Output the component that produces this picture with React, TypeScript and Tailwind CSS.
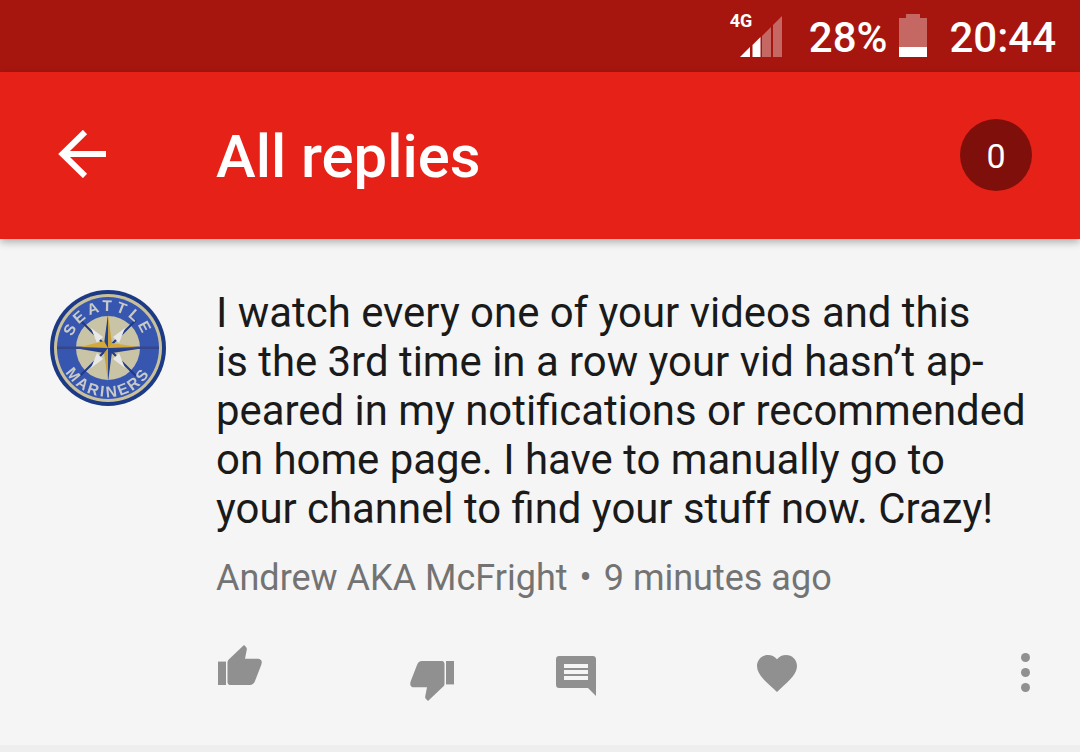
const lines = [
  "I watch every one of your videos and this",
  "is the 3rd time in a row your vid hasn’t ap-",
  "peared in my notifications or recommended",
  "on home page. I have to manually go to",
  "your channel to find your stuff now. Crazy!",
];

function SignalIcon() {
  return (
    <div className="relative h-[48px] w-[52px]">
      <span className="absolute left-0 top-[-3px] text-[18px] leading-[24px] font-bold text-white">4G</span>
      <svg className="absolute left-[10px] top-[3px]" width="42" height="43" viewBox="0 0 42 43" fill="#fff">
        <polygon points="0,42 10,42 10,32" />
        <polygon points="12.500,42 20.500,42 20.500,22 12.500,30" />
        <polygon points="22,42 31,42 31,12 22,21" opacity="0.35" />
        <polygon points="33,42 42,42 42,1 33,10" opacity="0.35" />
      </svg>
    </div>
  );
}

function BatteryIcon() {
  return (
    <svg width="28" height="43" viewBox="0 0 28 43" fill="#fff" className="block">
      <path d="M7 0h14v4h7v29H0V4h7z" opacity="0.35" />
      <rect x="0" y="33" width="28" height="10" />
    </svg>
  );
}

function Avatar() {
  return (
    <svg width="116" height="116" viewBox="0 0 116 116" className="shrink-0 blur-[0.5px]">
      <defs>
        <path id="top-arc" d="M21 58a37 37 0 0 1 74 0" />
        <path id="bottom-arc" d="M9 58a49 49 0 0 0 98 0" />
      </defs>
      <circle cx="58" cy="58" r="58" fill="#1d3a86" />
      <circle cx="58" cy="58" r="54" fill="#c9c19c" />
      <circle cx="58" cy="58" r="51" fill="#3656b0" />
      <circle cx="58" cy="58" r="32" fill="#c9c4a6" />
      <rect x="7" y="56.500" width="102" height="2.500" fill="#34478a" />
      <polygon points="58,58 30,30 50,50" fill="#1f3a88" stroke="#1f3a88" strokeWidth="2" />
      <polygon points="58,58 86,30 66,50" fill="#1f3a88" stroke="#1f3a88" strokeWidth="2" />
      <polygon points="58,58 30,86 50,66" fill="#1f3a88" stroke="#1f3a88" strokeWidth="2" />
      <polygon points="58,58 86,86 66,66" fill="#1f3a88" stroke="#1f3a88" strokeWidth="2" />
      <polygon points="41,38 53,47 47,53" fill="#e8e8e8" />
      <polygon points="75,38 69,53 63,47" fill="#e8e8e8" />
      <polygon points="41,78 47,63 53,69" fill="#e8e8e8" />
      <polygon points="75,78 63,69 69,63" fill="#e8e8e8" />
      <polygon points="58,24 54,54 58,58" fill="#25408c" />
      <polygon points="58,92 62,62 58,58" fill="#25408c" />
      <polygon points="58,24 62,54 58,58" fill="#c8a23c" />
      <polygon points="58,92 54,62 58,58" fill="#c8a23c" />
      <polygon points="30,57 54,51 58,58" fill="#d4a93c" />
      <polygon points="88,57 62,53 58,58" fill="#d4a93c" />
      <polygon points="88,59 62,63 58,58" fill="#25408c" />
      <polygon points="30,59 54,63 58,58" fill="#25408c" />
      <text fontFamily="'Liberation Sans', sans-serif" fontSize="15.500" fontWeight="700" fill="#c8cac8" letterSpacing="3.500">
        <textPath href="#top-arc" startOffset="50%" textAnchor="middle">SEATTLE</textPath>
      </text>
      <text fontFamily="'Liberation Sans', sans-serif" fontSize="15.500" fontWeight="700" fill="#c8cac8" letterSpacing="2.500">
        <textPath href="#bottom-arc" startOffset="50%" textAnchor="middle">MARINERS</textPath>
      </text>
    </svg>
  );
}

function ThumbUp() {
  return (
    <svg width="44" height="40" viewBox="0 0 44 41" preserveAspectRatio="none" fill="#909090" className="block">
      <rect x="0" y="17" width="8" height="24" />
      <path d="M12 41c-1.700 0-2.500-1.500-2.500-3V18c0-1.500.5-2.500 1.500-3.500L26 0l2 2c.6.7 1 1.500.8 2.500L27 14h13c2 0 4 1.500 3.800 3.800-.1 1-.3 1.800-.6 2.600L37 37c-1 2.500-2.500 4-5 4z" />
    </svg>
  );
}

function ThumbDown() {
  return (
    <svg width="44" height="40" viewBox="0 1 44 41" preserveAspectRatio="none" fill="#909090" className="block">
      <rect x="36" y="1" width="8" height="24" />
      <path d="M32 1c1.700 0 2.500 1.500 2.500 3v20c0 1.500-.5 2.500-1.500 3.500L18 42l-2-2c-.6-.7-1-1.500-.8-2.500L17 28H4c-2 0-4-1.500-3.800-3.800.1-1 .3-1.800.6-2.600L7 5c1-2.500 2.500-4 5-4z" />
    </svg>
  );
}

function CommentIcon() {
  return (
    <svg width="40" height="40" viewBox="0 0 40 40" fill="#909090" className="block">
      <path fillRule="evenodd" d="M3 0h34c1.700 0 3 1.300 3 3v37l-8-8H3c-1.700 0-3-1.300-3-3V3c0-1.700 1.300-3 3-3zM8 8v4h24V8zM8 14v4h24v-4zM8 20v4h24v-4z" />
    </svg>
  );
}

function HeartIcon() {
  return (
    <svg width="40" height="37" viewBox="0 0 40 37" fill="#909090" className="block">
      <path d="M20 37 17.100 34.300C6.800 25 0 18.800 0 11.100 0 4.800 4.800 0 11 0c3.500 0 6.800 1.600 9 4.200C22.200 1.600 25.500 0 29 0c6.200 0 11 4.800 11 11.100 0 7.700-6.800 13.900-17.100 23.200z" />
    </svg>
  );
}

export default function App() {
  return (
    <div className="flex h-[752px] w-[1080px] flex-col overflow-hidden bg-[#eeeeee] font-['Roboto',sans-serif]">
      <div className="flex h-[72px] shrink-0 items-center justify-end bg-[#a6160e] pr-[24px] text-white">
        <SignalIcon />
        <span className="ml-[27px] mt-[3px] text-[42px] font-medium leading-none">28%</span>
        <div className="ml-[12px] mt-[-1px]"><BatteryIcon /></div>
        <span className="ml-[22px] mt-[3px] text-[42px] font-medium leading-none">20:44</span>
      </div>

      <header className="relative z-10 flex h-[167px] shrink-0 items-center bg-[#e62117] pr-[48px] pl-[58px] shadow-[0_3px_8px_rgba(0,0,0,0.3)]">
        <svg width="48" height="48" viewBox="0 0 48 48" fill="none" stroke="#fff" strokeWidth="6" className="mt-[-3px]">
          <path d="M48 24H4M27 2 4.500 24 27 46" />
        </svg>
        <h1 className="ml-[110px] mt-[5px] flex-1 text-[59.800px] font-medium leading-none text-white">All replies</h1>
        <div className="mt-[-1px] flex h-[72px] w-[72px] items-center justify-center rounded-full bg-[#7f0f0a] pt-[2px] text-[34px] text-white">0</div>
      </header>

      <main className="flex h-[506px] shrink-0 bg-[#f5f5f5] pl-[50px] pr-[46px] pt-[51px]">
        <Avatar />
        <div className="ml-[50px] mt-[-2px] flex-1">
          <div className="text-[41.900px] leading-[49px] text-[#1a1a1a] whitespace-nowrap">
            {lines.map((l) => <div key={l}>{l}</div>)}
          </div>
          <div className="mt-[21px] text-[36px] leading-[48px] text-[#737373] whitespace-nowrap">
            Andrew AKA McFright<span className="mx-[12px]">•</span>9 minutes ago
          </div>
          <div className="ml-[2px] mt-[43px] flex items-start">
            <ThumbUp />
            <div className="ml-[148px] mt-[16px]"><ThumbDown /></div>
            <div className="ml-[102px] mt-[11px]"><CommentIcon /></div>
            <div className="ml-[161px] mt-[10px]"><HeartIcon /></div>
            <div className="ml-[224px] mt-[8px] flex flex-col gap-[6px]">
              <span className="h-[9px] w-[9px] rounded-full bg-[#909090]" />
              <span className="h-[9px] w-[9px] rounded-full bg-[#909090]" />
              <span className="h-[9px] w-[9px] rounded-full bg-[#909090]" />
            </div>
          </div>
        </div>
      </main>
    </div>
  );
}
